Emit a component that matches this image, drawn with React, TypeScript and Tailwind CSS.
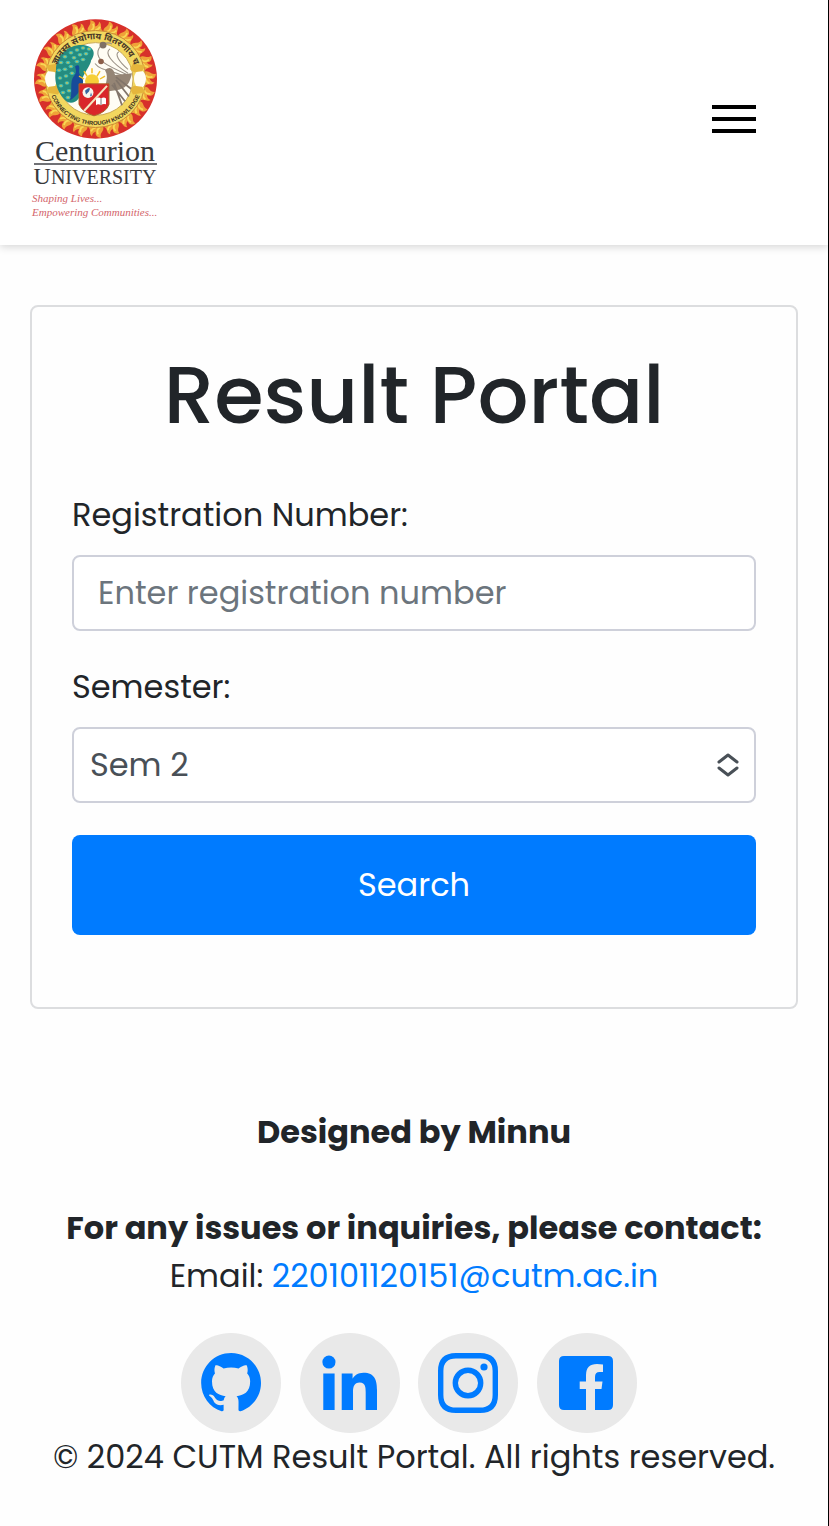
import { BiLogoGithub, BiLogoLinkedin } from "react-icons/bi";

type IconProps = { className?: string };

function InstagramIcon({ className }: IconProps) {
  return (
    <svg viewBox="0 0 72 72" className={className} fill="none" stroke="currentColor" strokeWidth="5.400" aria-hidden="true">
      <path d="M24 8.700H48Q63.300 8.700 63.300 24V48Q63.300 63.300 48 63.300H24Q8.700 63.300 8.700 48V24Q8.700 8.700 24 8.700Z" />
      <circle cx="36" cy="36" r="12.700" />
      <circle cx="52" cy="20" r="3.600" fill="currentColor" stroke="none" />
    </svg>
  );
}

function FacebookIcon({ className }: IconProps) {
  return (
    <svg viewBox="0 0 72 72" className={className} fill="currentColor" aria-hidden="true">
      <path d="M13 9H57Q62 9 62 14V58Q62 63 57 63H44V42H50.500L51.500 34.500H44V30Q44 25 48.500 25H52V17.500Q49 17 46 17Q35 17 35 28V34.500H28.700V42H35V63H13Q8 63 8 58V14Q8 9 13 9Z" />
    </svg>
  );
}

const socials = [
  { label: "GitHub", Icon: BiLogoGithub },
  { label: "LinkedIn", Icon: BiLogoLinkedin },
  { label: "Instagram", Icon: InstagramIcon },
  { label: "Facebook", Icon: FacebookIcon },
];

const flames = Array.from({ length: 20 }, (_, i) => i * 18);

const feathers = [
  [61, 62], [65, 56], [71, 52], [77, 49], [83, 47], [89, 48],
  [68, 62], [74, 57], [80, 54], [86, 53],
  [59, 70], [65, 69], [71, 66], [77, 61], [83, 59],
  [60, 78], [66, 76], [72, 73], [61, 86], [67, 83], [63, 93], [69, 91], [68, 98],
];

function UniversityLogo() {
  return (
    <svg viewBox="30 18 130 202" className="h-[202px] w-[130px]" role="img" aria-label="Centurion University">
      <defs>
        <path id="sealTop" d="M54.500 79a41 41 0 0 1 82 0" />
        <path id="sealBottom" d="M48 79a47.500 47.500 0 0 0 95 0" />
      </defs>
      <g transform="translate(95.500 79) scale(1 .97) translate(-95.500 -79)">
        <circle cx="95.500" cy="79" r="61.500" fill="#d7302b" />
        {flames.map((angle) => (
          <g key={angle} transform={`rotate(${angle} 95.500 79)`}>
            <path d="M88 30C86 25 92 24 90 18.500C95 19 96 22 95 25C98 24 99 22 99 20C103 23 99 26 103 30Z" fill="#efa238" />
            <path d="M91 29q4-2 2-7M95 29q4-1 5-4" fill="none" stroke="#f8d855" strokeWidth="1.800" />
          </g>
        ))}
        <circle cx="95.500" cy="79" r="50" fill="#f2d75f" stroke="#c98a35" strokeWidth="1" />
        <circle cx="95.500" cy="79" r="37.500" fill="#fffdf4" stroke="#c9a954" strokeWidth="1" />
        <ellipse cx="51" cy="79" rx="6" ry="9" fill="#fffdf4" />
        <ellipse cx="140" cy="79" rx="6" ry="9" fill="#fffdf4" />
        <path d="M46 65l12-2 3 6-4 3-8-1zM145 65l-12-2-3 6 4 3 8-1zM46 93l12 2 3-6-4-3-8 1zM145 93l-12 2-3-6 4-3 8 1z" fill="#e5b63c" />
        <path d="M82 91C77 80 91 66 91 60C98 50 91 43 79 44C65 46 56 56 56 70C53 83 60 98 68 103C76 105 80 99 82 91Z" fill="#248c80" />
        {feathers.map(([x, y]) => (
          <g key={`${x}-${y}`}>
            <ellipse cx={x} cy={y} rx="2.400" ry="1.800" fill="#48bdb0" />
            <circle cx={x} cy={y} r=".9" fill="#d3c450" />
          </g>
        ))}
        <path d="M75 66c4-3 5 0 4 5c0 5 5 6 4 12c-2 8-6 13-13 18c3-9-1-19 4-25c3-4 2-6 1-10z" fill="#174b9a" />
        <g fill="none" stroke="#9b9287" strokeWidth="1.100">
          <path d="M126 74C107 65 96 60 98 50C100 43 108 40 112 43M128 73C111 62 104 52 110 48M128 69C119 61 114 53 119 51M122 75C110 70 100 70 95 63" />
        </g>
        <circle cx="103" cy="44" r="3.500" fill="#7f7166" />
        <circle cx="101" cy="61" r="2.800" fill="#8b5e49" />
        <path d="M105 70c5-5 9-1 10 5l17-2c-2 9-4 14-13 17l-12 2c-4-8 3-13-2-22z" fill="#958575" />
        <path d="M112 85l13 17M114 83l8 23M116 80l13 17M116 77l15 12" stroke="#82756a" strokeWidth="1.800" />
        <circle cx="92" cy="81" r="7" fill="#f6cf38" />
        <path d="M92 68v5M84 71l3 5M100 71l-3 5M79 76l5 3M105 76l-5 3" stroke="#f2bf28" strokeWidth="1.500" />
        <path d="M79 84h30v21q-2 8-15 12q-12-4-15-12z" fill="#d9262a" stroke="#aa6628" />
        <path d="M84 112L107 86" stroke="#f4e5c0" strokeWidth="2" />
        <circle cx="88" cy="93" r="5.500" fill="#f7f5ed" />
        <path d="M85 91q4-4 5-2l-1 3-3 3zM91 93l1 3-2 1z" fill="#3765a0" />
        <path d="M96 99q3-2 5 0q3-2 5 0v6q-3-1-5 1q-3-2-5 0z" fill="#fff" />
        <path d="M101 99v7" stroke="#777" />
        <text fill="#4b3928" fontSize="9" fontWeight="700" fontFamily="'Noto Sans Devanagari', 'Noto Sans', sans-serif" textAnchor="middle">
          <textPath href="#sealTop" startOffset="50%">ज्ञानस्य संयोगाय वितरणाय च</textPath>
        </text>
        <text fill="#3d3020" fontSize="6" fontWeight="700" fontFamily="'Liberation Sans', sans-serif" textAnchor="middle">
          <textPath href="#sealBottom" startOffset="50%">CONNECTING THROUGH KNOWLEDGE</textPath>
        </text>
      </g>
      <g fontFamily="'Liberation Serif', serif">
        <text x="95" y="161" textAnchor="middle" fontSize="30" fill="#38393b">Centurion</text>
        <path d="M34 164h123" stroke="#414247" strokeWidth="1.500" />
        <text x="95" y="184" textAnchor="middle" fill="#38393b">
          <tspan fontSize="24">U</tspan><tspan fontSize="20">NIVERSITY</tspan>
        </text>
        <g fontStyle="italic" fontSize="11" fill="#d3646a">
          <text x="32" y="202">Shaping Lives...</text>
          <text x="32" y="216">Empowering Communities...</text>
        </g>
      </g>
    </svg>
  );
}

export default function App() {
  return (
    <div className="min-h-screen border-r border-black bg-[#fefefe] font-['Poppins','Inter',sans-serif] text-[32px] leading-[48px] text-[#212529]">
      <header className="flex items-center justify-between bg-white pt-[18px] pr-[72px] pb-[25px] pl-[30px] shadow-[0_2px_8px_rgba(0,0,0,0.16)]">
        <a href="#" aria-label="Home"><UniversityLogo /></a>
        <button type="button" aria-label="Open menu" className="flex w-11 flex-col gap-2">
          <span className="h-1 w-full bg-black" />
          <span className="h-1 w-full bg-black" />
          <span className="h-1 w-full bg-black" />
        </button>
      </header>

      <main className="px-[30px] pt-[60px]">
        <form className="rounded-lg border-2 border-[#dcdddf] px-10 pt-10 pb-[72px]" onSubmit={(event) => event.preventDefault()}>
          <h1 className="mb-12 text-center text-[80px] leading-[96px] font-medium">Result Portal</h1>
          <label htmlFor="registration" className="mb-4 block">Registration Number:</label>
          <input
            id="registration"
            type="text"
            placeholder="Enter registration number"
            className="mb-8 block h-[76px] w-full rounded-lg border-2 border-[#ced0da] bg-white px-6 placeholder:text-[#6c757d] placeholder:opacity-100"
          />
          <label htmlFor="semester" className="mb-4 block">Semester:</label>
          <div className="relative mb-8">
            <select id="semester" defaultValue="2" className="block h-[76px] w-full appearance-none rounded-lg border-2 border-[#ced0da] bg-white px-4 text-[#495057]">
              <option value="1">Sem 1</option>
              <option value="2">Sem 2</option>
              <option value="3">Sem 3</option>
              <option value="4">Sem 4</option>
            </select>
            <svg viewBox="0 0 22 24" className="pointer-events-none absolute top-[26px] right-[17px] h-6 w-[22px]" fill="none" stroke="#495057" strokeWidth="3" strokeLinecap="round" strokeLinejoin="round" aria-hidden="true">
              <path d="M2 9l9-7 9 7M2 15l9 7 9-7" />
            </svg>
          </div>
          <button type="submit" className="block h-[100px] w-full rounded-lg bg-[#007bff] text-white">Search</button>
        </form>
      </main>

      <footer className="px-5 pt-[99px] pb-11 text-center">
        <p className="mb-12 font-bold">Designed by Minnu</p>
        <p className="font-bold">For any issues or inquiries, please contact:</p>
        <p>Email: <a href="mailto:220101120151@cutm.ac.in" className="text-[#007bff]">220101120151@cutm.ac.in</a></p>
        <nav aria-label="Social links" className="mt-[33px] mr-2.5 flex justify-center">
          <div className="flex w-full max-w-[456px] justify-between">
            {socials.map(({ label, Icon }) => (
              <a key={label} href="#" aria-label={label} className="flex size-[100px] items-center justify-center rounded-full bg-[#e9e9e9] text-[#007bff]">
                <Icon className="size-[72px]" />
              </a>
            ))}
          </div>
        </nav>
        <p>© 2024 CUTM Result Portal. All rights reserved.</p>
      </footer>
    </div>
  );
}
